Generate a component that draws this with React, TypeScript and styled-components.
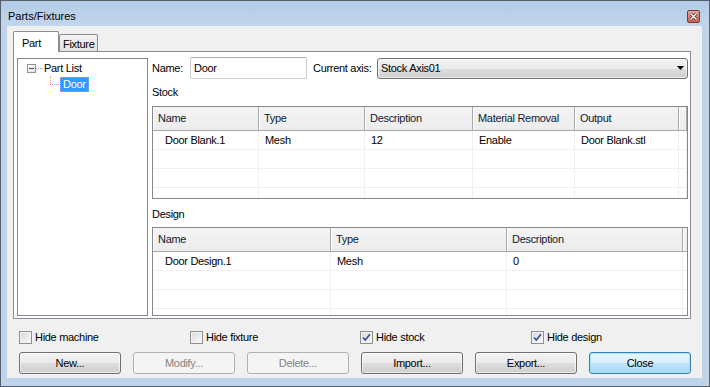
import styled, { createGlobalStyle, css } from 'styled-components';

type Column = { title: string; width: number };

const stockColumns: Column[] = [
  { title: 'Name', width: 106 },
  { title: 'Type', width: 106 },
  { title: 'Description', width: 108 },
  { title: 'Material Removal', width: 102 },
  { title: 'Output', width: 104 },
  { title: '', width: 8 },
];

const stockRows = [['Door Blank.1', 'Mesh', '12', 'Enable', 'Door Blank.stl', '']];

const designColumns: Column[] = [
  { title: 'Name', width: 178 },
  { title: 'Type', width: 176 },
  { title: 'Description', width: 176 },
  { title: '', width: 4 },
];

const designRows = [['Door Design.1', 'Mesh', '0', '']];

const toggles = [
  { label: 'Hide machine', checked: false },
  { label: 'Hide fixture', checked: false },
  { label: 'Hide stock', checked: true },
  { label: 'Hide design', checked: true },
];

const buttons: { label: string; kind: 'normal' | 'disabled' | 'default' }[] = [
  { label: 'New...', kind: 'normal' },
  { label: 'Modify...', kind: 'disabled' },
  { label: 'Delete...', kind: 'disabled' },
  { label: 'Import...', kind: 'normal' },
  { label: 'Export...', kind: 'normal' },
  { label: 'Close', kind: 'default' },
];

function ListView({ columns, rows, height }: { columns: Column[]; rows: string[][]; height: number }) {
  const template = columns.map((c) => `${c.width}px`).join(' ');
  const filled = [...rows];
  while (filled.length < 4) filled.push(columns.map(() => ''));
  return (
    <ListBox $height={height}>
      <HeaderRow $template={template}>
        {columns.map((c, i) => (
          <HeaderCell key={i}>{c.title}</HeaderCell>
        ))}
      </HeaderRow>
      {filled.map((row, r) => (
        <DataRow key={r} $template={template}>
          {row.map((cell, i) => (
            <DataCell key={i} $first={i === 0}>
              {cell}
            </DataCell>
          ))}
        </DataRow>
      ))}
    </ListBox>
  );
}

export default function App() {
  return (
    <>
      <GlobalStyle />
      <Window>
        <TitleBar>
          <Title>Parts/Fixtures</Title>
          <CloseBox>
            <svg width="11" height="11" viewBox="0 0 11 11">
              <path d="M2.5 2.5 L8.5 8.5 M8.5 2.5 L2.5 8.5" stroke="#5a1f18" strokeWidth="3" />
              <path d="M2.5 2.5 L8.5 8.5 M8.5 2.5 L2.5 8.5" stroke="#ffffff" strokeWidth="1.5" />
            </svg>
          </CloseBox>
        </TitleBar>

        <Client>
          <TabStrip>
            <Tab $active>Part</Tab>
            <Tab>Fixture</Tab>
          </TabStrip>

          <Panel>
            <Tree>
              <RootRow>
                <ExpandBox />
                <HLine />
                <TreeLabel>Part List</TreeLabel>
              </RootRow>
              <ChildRow>
                <Elbow />
                <SelectedLabel>Door</SelectedLabel>
              </ChildRow>
            </Tree>

            <Details>
              <NameRow>
                <FieldLabel $width={38}>Name:</FieldLabel>
                <TextBox>Door</TextBox>
                <FieldLabel $width={64} $gap={6}>
                  Current axis:
                </FieldLabel>
                <Combo>
                  <span>Stock Axis01</span>
                  <svg width="7" height="4" viewBox="0 0 7 4">
                    <polygon points="0,0 7,0 3.5,4" fill="#000" />
                  </svg>
                </Combo>
              </NameRow>

              <SectionLabel $top={6} $bottom={7}>Stock</SectionLabel>
              <ListView columns={stockColumns} rows={stockRows} height={93} />

              <SectionLabel $top={8} $bottom={6}>Design</SectionLabel>
              <ListView columns={designColumns} rows={designRows} height={89} />
            </Details>
          </Panel>

          <ToggleRow>
            {toggles.map((t) => (
              <Toggle key={t.label}>
                <CheckBox>
                  {t.checked && (
                    <svg width="11" height="11" viewBox="0 0 11 11">
                      <path d="M2 5.5 L4.3 8 L9 2.2" fill="none" stroke="#3a5392" strokeWidth="1.7" />
                    </svg>
                  )}
                </CheckBox>
                <span>{t.label}</span>
              </Toggle>
            ))}
          </ToggleRow>

          <ButtonRow>
            {buttons.map((b) => (
              <Button key={b.label} $kind={b.kind}>
                {b.label}
              </Button>
            ))}
          </ButtonRow>
        </Client>
      </Window>
    </>
  );
}

const GlobalStyle = createGlobalStyle`
  html, body {
    margin: 0;
    padding: 0;
    background: #ffffff;
  }
  body {
    font-family: "Liberation Sans", Arial, sans-serif;
    font-size: 11px;
    letter-spacing: -0.3px;
    color: #000;
  }
  * {
    box-sizing: border-box;
  }
`;

const Window = styled.div`
  width: 710px;
  height: 387px;
  border: 1px solid #55606c;
  background: #bfd4eb;
  display: flex;
  flex-direction: column;
`;

const TitleBar = styled.div`
  height: 25px;
  flex: none;
  display: flex;
  justify-content: space-between;
  align-items: flex-start;
  padding: 0 9px 0 7px;
  background: linear-gradient(#b3cbe6, #c1d6ed);
`;

const Title = styled.span`
  margin-top: 8px;
  line-height: 14px;
  letter-spacing: 0;
`;

const CloseBox = styled.div`
  width: 13px;
  height: 13px;
  margin-top: 9px;
  border: 1px solid #7a3a32;
  border-radius: 2px;
  background: linear-gradient(#e6ad9f, #c7604e);
  display: flex;
  align-items: center;
  justify-content: center;
`;

const Client = styled.div`
  flex: 1;
  margin: 0 7px 8px 6px;
  padding: 5px 0 0 6px;
  background: #f0f0f0;
  display: flex;
  flex-direction: column;
`;

const TabStrip = styled.div`
  height: 21px;
  display: flex;
  align-items: flex-end;
`;

const Tab = styled.div<{ $active?: boolean }>`
  position: relative;
  line-height: 14px;
  border: 1px solid #898c95;
  border-bottom: none;
  border-radius: 2px 2px 0 0;
  ${(p) =>
    p.$active
      ? css`
          z-index: 1;
          width: 46px;
          height: 21px;
          padding: 4px 0 0 8px;
          background: #ffffff;
        `
      : css`
          width: 39px;
          height: 17px;
          margin-bottom: 1px;
          padding: 2px 0 0 3px;
          background: linear-gradient(#f4f4f4, #e2e2e2);
        `}
`;

const Panel = styled.div`
  width: 678px;
  height: 268px;
  margin-top: -1px;
  border: 1px solid #898c95;
  background: #ffffff;
  padding: 5px 2px 2px 3px;
  display: flex;
  align-items: flex-start;
  gap: 4px;
`;

const Tree = styled.div`
  width: 131px;
  height: 258px;
  margin-top: 1px;
  border: 1px solid #828790;
  background: #ffffff;
  padding-top: 1px;
`;

const RootRow = styled.div`
  height: 16px;
  display: flex;
  align-items: center;
  padding-left: 9px;
`;

const ExpandBox = styled.span`
  position: relative;
  width: 9px;
  height: 9px;
  border: 1px solid #919191;
  background: linear-gradient(135deg, #ffffff, #dcdcdc);

  &::after {
    content: '';
    position: absolute;
    left: 1px;
    top: 3px;
    width: 5px;
    height: 1px;
    background: #2f4f96;
  }
`;

const HLine = styled.span`
  width: 7px;
  height: 1px;
  border-top: 1px dotted #a0a0a0;
`;

const TreeLabel = styled.span`
  margin-left: 1px;
  line-height: 14px;
`;

const ChildRow = styled.div`
  height: 16px;
  display: flex;
  align-items: flex-start;
  padding-left: 32px;
`;

const Elbow = styled.span`
  width: 9px;
  height: 9px;
  border-left: 1px dotted #a0a0a0;
  border-bottom: 1px dotted #a0a0a0;
`;

const SelectedLabel = styled.span`
  margin: 1px 0 0 1px;
  height: 15px;
  line-height: 13px;
  padding: 0 2px;
  border: 1px dotted #e2a24a;
  background: #3399ff;
  color: #ffffff;
`;

const Details = styled.div`
  width: 536px;
  display: flex;
  flex-direction: column;
`;

const NameRow = styled.div`
  height: 22px;
  display: flex;
  align-items: center;
`;

const FieldLabel = styled.span<{ $width: number; $gap?: number }>`
  width: ${(p) => p.$width}px;
  margin-left: ${(p) => p.$gap ?? 0}px;
  white-space: nowrap;
`;

const TextBox = styled.div`
  width: 117px;
  height: 22px;
  border: 1px solid #c9ccd1;
  border-top-color: #abadb3;
  border-radius: 2px;
  background: #ffffff;
  padding-left: 3px;
  line-height: 20px;
`;

const Combo = styled.div`
  width: 311px;
  height: 21px;
  border: 1px solid #707070;
  border-radius: 3px;
  background: linear-gradient(#f2f2f2 0%, #ebebeb 50%, #dddddd 51%, #cfcfcf 100%);
  box-shadow: inset 0 0 0 1px rgba(255, 255, 255, 0.6);
  padding: 0 3px 0 3px;
  display: flex;
  align-items: center;
  justify-content: space-between;
`;

const SectionLabel = styled.div<{ $top: number; $bottom: number }>`
  margin: ${(p) => p.$top}px 0 ${(p) => p.$bottom}px;
  line-height: 14px;
`;

const ListBox = styled.div<{ $height: number }>`
  height: ${(p) => p.$height}px;
  border: 1px solid #828790;
  background: #ffffff;
  overflow: hidden;
`;

const HeaderRow = styled.div<{ $template: string }>`
  display: grid;
  grid-template-columns: ${(p) => p.$template};
  height: 24px;
  border-bottom: 1px solid #a8a8a8;
  background: linear-gradient(#f4f4f4, #ececec);
`;

const HeaderCell = styled.div`
  border-right: 1px solid #a8a8a8;
  box-shadow: inset 1px 0 0 #ffffff;
  padding-left: 5px;
  line-height: 23px;
  white-space: nowrap;
  overflow: hidden;
  color: #0e1a33;
`;

const DataRow = styled.div<{ $template: string }>`
  display: grid;
  grid-template-columns: ${(p) => p.$template};
  height: 19px;
  border-bottom: 1px solid #f0f0f0;
`;

const DataCell = styled.div<{ $first: boolean }>`
  border-right: 1px solid #f0f0f0;
  padding-left: ${(p) => (p.$first ? 12 : 6)}px;
  line-height: 18px;
  white-space: nowrap;
  overflow: hidden;
`;

const ToggleRow = styled.div`
  margin-top: 12px;
  padding-left: 6px;
  height: 13px;
  display: grid;
  grid-template-columns: 171px 170px 171px 1fr;
`;

const Toggle = styled.label`
  display: flex;
  align-items: center;
  gap: 3px;
  line-height: 13px;
`;

const CheckBox = styled.span`
  width: 13px;
  height: 13px;
  border: 1px solid #8e8f8f;
  background: linear-gradient(135deg, #d6d8db, #fbfbfb);
  box-shadow: inset 0 0 0 1px #f4f4f4;
  display: flex;
  align-items: center;
  justify-content: center;
`;

const ButtonRow = styled.div`
  margin-top: 8px;
  padding-left: 6px;
  display: flex;
  gap: 12px;
`;

const Button = styled.div<{ $kind: 'normal' | 'disabled' | 'default' }>`
  width: 102px;
  height: 22px;
  border-radius: 3px;
  display: flex;
  align-items: center;
  justify-content: center;
  ${(p) =>
    p.$kind === 'disabled'
      ? css`
          border: 1px solid #adb2b5;
          background: #f4f4f4;
          color: #838383;
        `
      : p.$kind === 'default'
        ? css`
            border: 1px solid #3c7fb1;
            background: linear-gradient(#e8f6fd 0%, #d9f0fc 50%, #bee6fd 51%, #a7d9f5 100%);
            box-shadow: inset 0 0 0 1px #9fe4fb;
          `
        : css`
            border: 1px solid #707070;
            background: linear-gradient(#f2f2f2 0%, #ebebeb 50%, #dddddd 51%, #cfcfcf 100%);
            box-shadow: inset 0 0 0 1px rgba(255, 255, 255, 0.6);
          `}
`;
